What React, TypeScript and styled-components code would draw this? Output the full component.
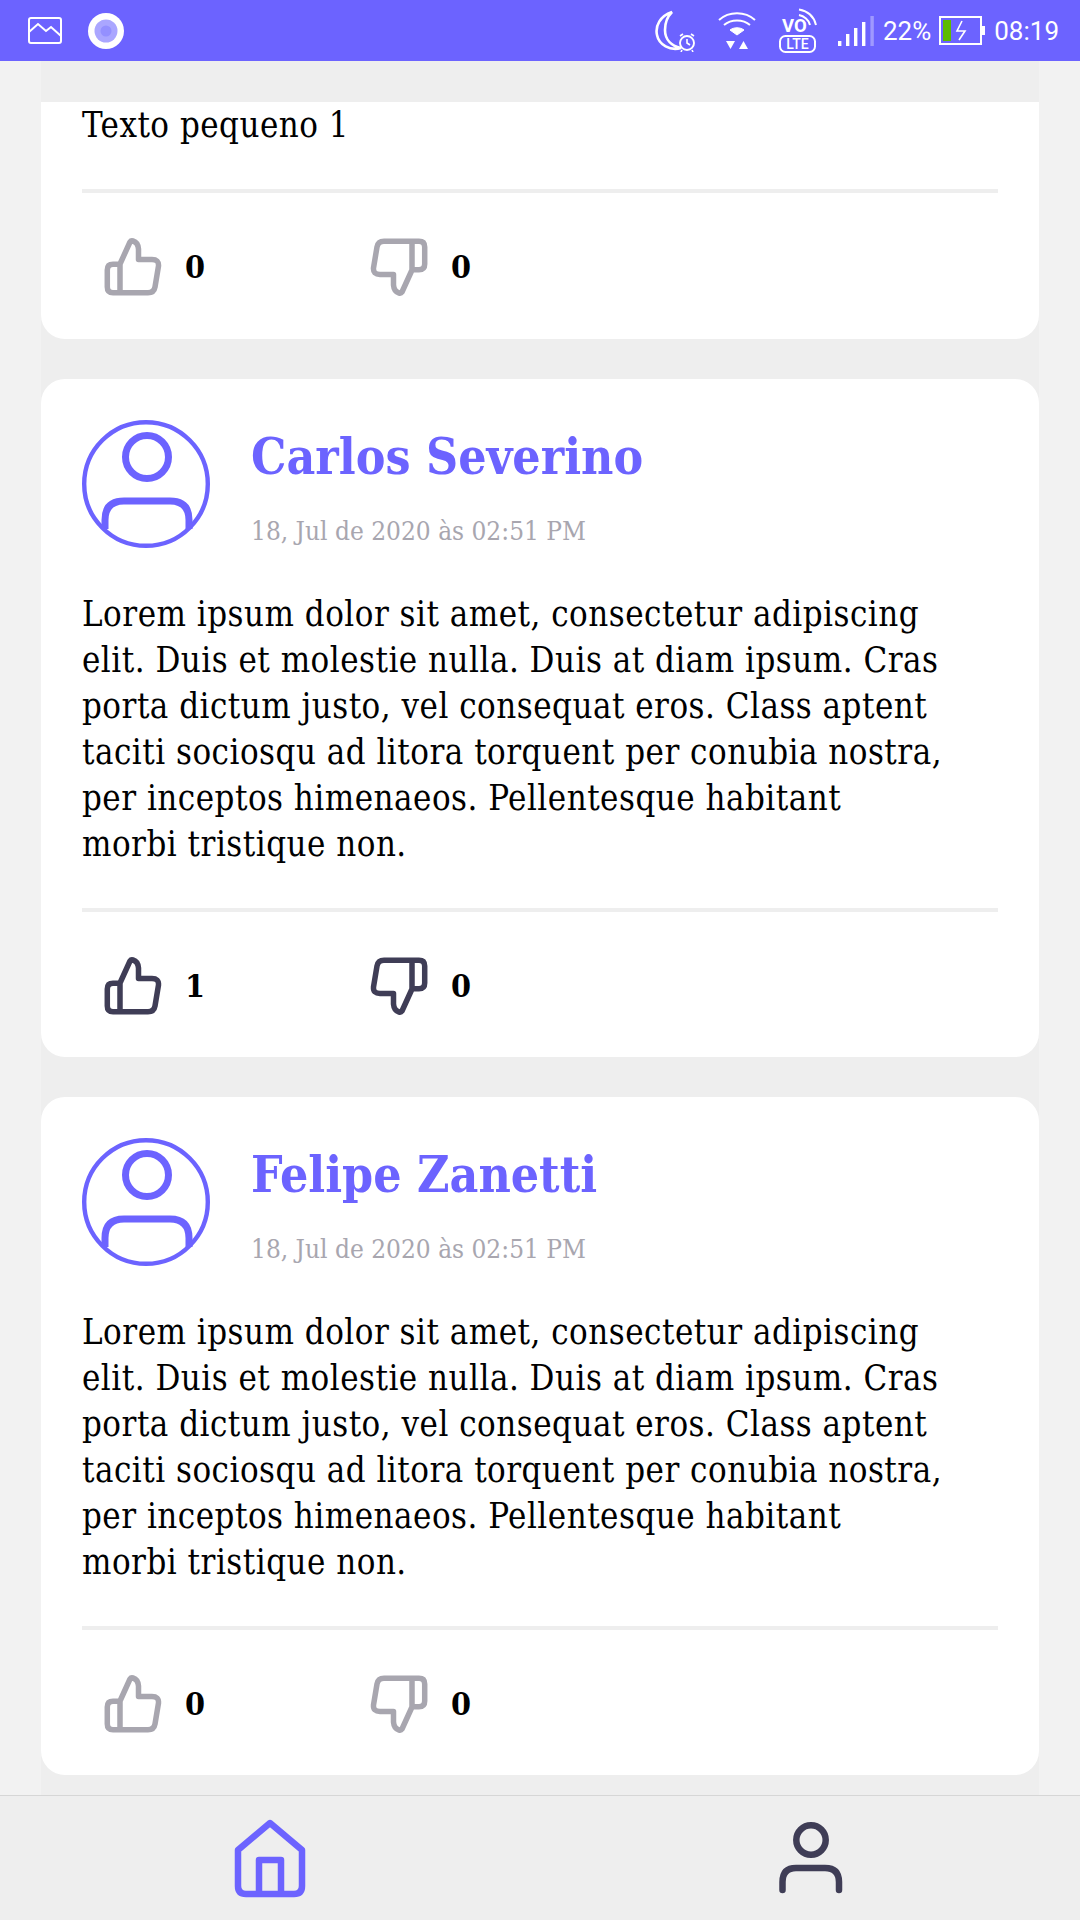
import styled, { createGlobalStyle } from 'styled-components';

const PURPLE = '#6c63ff';
const DARK = '#3f3d56';
const GRAY = '#a8a6af';
const SLAB = '"DejaVu Serif Condensed", "DejaVu Serif", serif';

const LOREM =
  'Lorem ipsum dolor sit amet, consectetur adipiscing elit. Duis et molestie nulla. Duis at diam ipsum. Cras porta dictum justo, vel consequat eros. Class aptent taciti sociosqu ad litora torquent per conubia nostra, per inceptos himenaeos. Pellentesque habitant morbi tristique non.';

const GlobalStyle = createGlobalStyle`
  html, body {
    margin: 0;
    padding: 0;
    background: #f2f2f2;
  }
`;

const Screen = styled.div`
  display: flex;
  flex-direction: column;
  width: 1080px;
  height: 1920px;
  overflow: hidden;
  background: #f2f2f2;
`;

const StatusBar = styled.div`
  display: flex;
  align-items: center;
  justify-content: space-between;
  flex: 0 0 61px;
  padding: 0 21px 0 28px;
  background: ${PURPLE};
  color: #fff;
  font-family: Roboto, sans-serif;
  font-size: 26px;
`;

const StatusGroup = styled.div`
  display: flex;
  align-items: center;
`;

const StatusText = styled.span<{ $gap?: number }>`
  margin-left: ${(props) => props.$gap ?? 0}px;
  line-height: 30px;
`;

const Feed = styled.div`
  display: flex;
  flex: 1;
  flex-direction: column;
  gap: 40px;
  min-height: 0;
  margin: 0 41px;
  padding-top: 41px;
  overflow: hidden;
  background: #eeeeee;
`;

const Card = styled.div`
  flex: none;
  padding: 0 41px 1px;
  border-radius: 0 0 24px 24px;
  background: #fff;
`;

const FullCard = styled(Card)`
  padding: 41px 41px 0;
  border-radius: 24px;
`;

const CardHeader = styled.div`
  display: flex;
  gap: 41px;
  margin-bottom: 43px;
`;

const AuthorInfo = styled.div`
  display: flex;
  flex-direction: column;
`;

const AuthorName = styled.div`
  margin-top: 3px;
  color: ${PURPLE};
  font-family: ${SLAB};
  font-size: 49.5px;
  font-weight: 700;
  line-height: 68px;
`;

const CommentDate = styled.div`
  margin-top: 23px;
  color: ${GRAY};
  font-family: ${SLAB};
  font-size: 26px;
  line-height: 34px;
`;

const CommentText = styled.p`
  margin: 0;
  padding-right: 53px;
  color: #000;
  font-family: ${SLAB};
  font-size: 34.5px;
  letter-spacing: 0.5px;
  line-height: 46px;
`;

const Divider = styled.div`
  height: 4px;
  margin-top: 41px;
  background: #eeeeee;
`;

const Actions = styled.div`
  display: flex;
  align-items: center;
  height: 145px;
  padding: 2px 0 0 22px;
  box-sizing: border-box;
`;

const Vote = styled.div`
  display: flex;
  align-items: center;
  gap: 23px;
  width: 266px;
`;

const VoteCount = styled.span`
  color: #000;
  font-family: ${SLAB};
  font-size: 32px;
  font-weight: 700;
`;

const BottomNav = styled.nav`
  display: flex;
  flex: 0 0 125px;
  align-items: center;
  justify-content: space-between;
  padding: 0 237px 0 234px;
  border-top: 1px solid #d6d6d6;
  box-sizing: border-box;
  background: #eeeeee;
`;

const ThumbSvg = styled.svg<{ $down?: boolean }>`
  transform: ${(props) => (props.$down ? 'rotate(180deg)' : 'none')};
`;

const ImageIcon = () => (
  <svg width="34" height="27" viewBox="0 0 34 27" fill="none" stroke="#fff" strokeWidth="2">
    <rect x="1" y="1" width="32" height="25" rx="2" />
    <path d="M1 15 L10 7 L18 14 L23 10 L33 19" />
  </svg>
);

const RecordIcon = () => (
  <svg width="36" height="36" viewBox="0 0 36 36" style={{ marginLeft: 26 }}>
    <circle cx="18" cy="18" r="18" fill="#fff" />
    <circle cx="18" cy="18" r="11.5" fill="#aaa6ff" />
    <circle cx="18" cy="18" r="5.5" fill="#9490ff" />
  </svg>
);

const MoonAlarmIcon = () => (
  <svg width="42" height="42" viewBox="0 0 42 42" fill="none" stroke="#fff">
    <path d="M17 2 C5 6 0 16 2 25 C4 35 15 41 26 38 C17 36 10 30 10 20 C10 12 12 7 17 2 Z" strokeWidth="2.6" />
    <circle cx="32" cy="33" r="7" fill={PURPLE} strokeWidth="1.9" />
    <path d="M32 29 V33 L35 35 M25 26 L28 24 M36 24 L39 26 M27 40 L26 42 M37 40 L38 42" strokeWidth="1.6" />
  </svg>
);

const WifiIcon = () => (
  <svg width="38" height="38" viewBox="0 0 38 38" fill="none" stroke="#fff" style={{ marginLeft: 21 }}>
    <path d="M1 8 C11 -1 27 -1 37 8" strokeWidth="2" />
    <path d="M6 13 C13 7 25 7 32 13" strokeWidth="2" />
    <path d="M12 18 C16 15 22 15 26 18 L19 23 Z" fill="#fff" strokeWidth="1" />
    <path d="M8 29 H17 L12.5 37 Z M21 37 H30 L25.5 29 Z" fill="#fff" strokeWidth="0" />
  </svg>
);

const VolteIcon = () => (
  <svg width="38" height="46" viewBox="0 0 38 46" fill="none" stroke="#fff" style={{ marginLeft: 23 }}>
    <text x="3" y="24" fill="#fff" stroke="none" fontFamily="Roboto, sans-serif" fontSize="18.5" fontWeight="700">VO</text>
    <path d="M20 1.5 C29 3 35 9 37 17 M20 7 C25 8 30 12 31 17" strokeWidth="2" />
    <rect x="1" y="28" width="35" height="16" rx="5.5" strokeWidth="2" />
    <text x="18.5" y="41" fill="#fff" stroke="none" textAnchor="middle" fontFamily="Roboto, sans-serif" fontSize="14" fontWeight="500">LTE</text>
  </svg>
);

const SignalIcon = () => (
  <svg width="36" height="31" viewBox="0 0 36 31" fill="#fff" style={{ marginLeft: 21 }}>
    <rect x="0" y="26" width="3.4" height="5" />
    <rect x="8" y="19" width="3.4" height="12" />
    <rect x="16" y="13" width="3.4" height="18" />
    <rect x="24" y="7" width="3.4" height="24" />
    <rect x="32.4" y="1" width="3.4" height="30" opacity="0.35" />
  </svg>
);

const BatteryIcon = () => (
  <svg width="46" height="29" viewBox="0 0 46 29" fill="none" style={{ marginLeft: 8 }}>
    <rect x="1" y="1" width="41" height="27" stroke="#fff" strokeWidth="2" />
    <rect x="4" y="4" width="8" height="21" fill="#5dbb00" />
    <rect x="43" y="10" width="3" height="9" fill="#fff" />
    <path d="M23 5 L18 15 H26 L20 24" stroke="#fff" strokeWidth="1.6" />
  </svg>
);

const Thumb = ({ color, down }: { color: string; down?: boolean }) => (
  <ThumbSvg $down={down} width="58" height="60" viewBox="0 0 58 60" fill="none" stroke={color} strokeWidth="5.5" strokeLinejoin="round">
    <path d="M16 27 L26 5 Q27 3.5 29 4 Q34 5.5 34.5 12 V22.5 H48 Q55 22.5 54.5 29 L51 50 Q50 55.7 44 55.7 H9 Q3.3 55.7 3.3 50 V33 Q3.3 27.3 9 27.3 H16 V55.7" />
  </ThumbSvg>
);

const Avatar = () => (
  <svg width="128" height="128" viewBox="0 0 128 128" fill="none" stroke={PURPLE} style={{ flex: 'none' }}>
    <circle cx="64" cy="64" r="61.8" strokeWidth="4.4" />
    <circle cx="65" cy="37" r="21.5" strokeWidth="7" />
    <path d="M23 109 V100 Q23 81 42 81 H88 Q107 81 107 100 V109" strokeWidth="7" />
  </svg>
);

const HomeIcon = () => (
  <svg width="72" height="79" viewBox="0 0 72 79" fill="none" stroke={PURPLE} strokeWidth="6.5" strokeLinejoin="round">
    <path d="M36 4 L4 31 V67 Q4 75 12 75 H60 Q68 75 68 67 V31 Z" />
    <path d="M25 75 V41 H47 V75" />
  </svg>
);

const PersonIcon = () => (
  <svg width="64" height="72" viewBox="0 0 64 72" fill="none" stroke={DARK} strokeWidth="6.5" strokeLinecap="round">
    <circle cx="32" cy="18" r="14.7" />
    <path d="M3.5 68 V60 Q3.5 46 17 46 H46 Q60 46 60 60 V68" />
  </svg>
);

type VotesProps = { likes: number; dislikes: number };

const Votes = ({ likes, dislikes }: VotesProps) => (
  <Actions>
    <Vote>
      <Thumb color={likes > 0 ? DARK : GRAY} />
      <VoteCount>{likes}</VoteCount>
    </Vote>
    <Vote>
      <Thumb color={dislikes > 0 || likes > 0 ? DARK : GRAY} down />
      <VoteCount>{dislikes}</VoteCount>
    </Vote>
  </Actions>
);

const comments = [
  { name: 'Carlos Severino', likes: 1, dislikes: 0 },
  { name: 'Felipe Zanetti', likes: 0, dislikes: 0 },
];

const App = () => (
  <Screen>
    <GlobalStyle />
    <StatusBar>
      <StatusGroup>
        <ImageIcon />
        <RecordIcon />
      </StatusGroup>
      <StatusGroup>
        <MoonAlarmIcon />
        <WifiIcon />
        <VolteIcon />
        <SignalIcon />
        <StatusText $gap={9}>22%</StatusText>
        <BatteryIcon />
        <StatusText $gap={9}>08:19</StatusText>
      </StatusGroup>
    </StatusBar>
    <Feed>
      <Card>
        <CommentText>Texto pequeno 1</CommentText>
        <Divider />
        <Votes likes={0} dislikes={0} />
      </Card>
      {comments.map((comment) => (
        <FullCard key={comment.name}>
          <CardHeader>
            <Avatar />
            <AuthorInfo>
              <AuthorName>{comment.name}</AuthorName>
              <CommentDate>18, Jul de 2020 às 02:51 PM</CommentDate>
            </AuthorInfo>
          </CardHeader>
          <CommentText>{LOREM}</CommentText>
          <Divider />
          <Votes likes={comment.likes} dislikes={comment.dislikes} />
        </FullCard>
      ))}
    </Feed>
    <BottomNav>
      <HomeIcon />
      <PersonIcon />
    </BottomNav>
  </Screen>
);

export default App;
